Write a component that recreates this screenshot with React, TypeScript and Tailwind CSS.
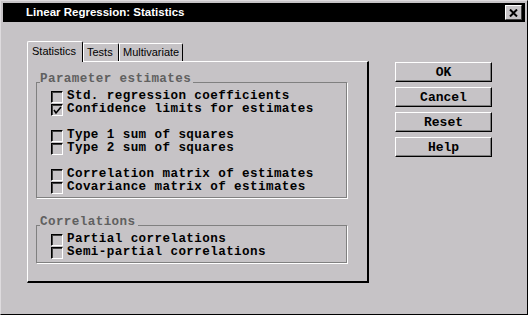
import React from "react";

const mono = { fontFamily: '"Liberation Mono", "DejaVu Sans Mono", monospace' };

function CheckBox({ checked }: { checked?: boolean }) {
  return (
    <span className="relative inline-block w-[12px] h-[12px] shrink-0 border-t border-l border-t-black border-l-black border-b border-r border-b-white border-r-white shadow-[inset_1px_1px_0_#404040] bg-[#c6c3c6]">
      {checked && (
        <svg className="absolute left-[1px] top-[1px]" width="9" height="9" viewBox="0 0 9 9">
          <path d="M1 4 L3 7 L8 1" stroke="black" strokeWidth="1.6" fill="none" />
        </svg>
      )}
    </span>
  );
}

function Row({ label, checked }: { label: string; checked?: boolean }) {
  return (
    <div className="flex items-center h-[13px] gap-[4px]">
      <CheckBox checked={checked} />
      <span className="text-[12.6px] tracking-[0.4px] font-bold leading-[13px] text-black whitespace-pre" style={mono}>
        {label}
      </span>
    </div>
  );
}

function Group({ title, children }: { title: string; children: React.ReactNode }) {
  return (
    <div className="relative border border-[#808080] shadow-[1px_1px_0_#ffffff] pl-[14px] pt-[7px] pb-[3px]">
      <span
        className="absolute -top-[10px] left-[3px] bg-[#c6c3c6] pr-[2px] text-[12.6px] tracking-[0.4px] font-bold leading-none text-[#606060] whitespace-pre"
        style={mono}
      >
        {title}
      </span>
      {children}
    </div>
  );
}

function Btn({ label }: { label: string }) {
  return (
    <button
      className="w-[97px] h-[20px] flex items-center justify-center bg-[#c6c3c6] border-t border-l border-t-white border-l-white border-b border-r border-b-black border-r-black shadow-[inset_-1px_-1px_0_#808080] text-[13px] font-bold leading-none text-black"
      style={mono}
    >
      {label}
    </button>
  );
}

export default function App() {
  return (
    <div className="w-[528px] h-[315px] bg-[#c6c3c6] border-t border-l border-t-[#dedbde] border-l-[#dedbde] border-b border-r border-b-black border-r-black p-[2px] overflow-hidden">
      <div className="h-[19px] bg-black flex items-center justify-between pl-[23px] pr-[3px]">
        <span
          className="text-white font-bold text-[11.5px] leading-none"
          style={{ fontFamily: '"Liberation Sans", Arial, sans-serif' }}
        >
          Linear Regression: Statistics
        </span>
        <span className="w-[17px] h-[15px] flex items-center justify-center bg-[#c6c3c6] border-t border-l border-t-white border-l-white border-b border-r border-b-[#404040] border-r-[#404040]">
          <svg width="9" height="8" viewBox="0 0 9 8">
            <path d="M1 0.5 L8 7.5 M8 0.5 L1 7.5" stroke="black" strokeWidth="2" />
          </svg>
        </span>
      </div>

      <div className="flex pl-[24px] pt-[19px]">
        <div className="w-[342px]">
          <div
            className="flex items-end h-[20px] text-[11px] text-black"
            style={{ fontFamily: '"Liberation Sans", Arial, sans-serif' }}
          >
            <div className="relative z-10 h-[21px] -mb-[1px] w-[56px] bg-[#c6c3c6] border-t border-l border-t-white border-l-white border-r border-r-black rounded-tl-[2px] rounded-tr-[2px] flex items-center pl-[4px] pb-[1px]">
              Statistics
            </div>
            <div className="h-[18px] w-[36px] border-t border-l border-t-white border-l-white border-r border-r-black rounded-tr-[2px] flex items-center pl-[3px]">
              Tests
            </div>
            <div className="h-[18px] w-[64px] border-t border-l border-t-white border-l-white border-r border-r-black rounded-tr-[2px] flex items-center pl-[3px]">
              Multivariate
            </div>
          </div>
          <div className="h-[222px] border-t border-l border-t-white border-l-white border-b-[2px] border-r-[2px] border-b-black border-r-black pl-[8px] pr-[20px] pt-[20px]">
            <Group title="Parameter estimates">
              <Row label="Std. regression coefficients" />
              <Row label="Confidence limits for estimates" checked />
              <div className="h-[13px]" />
              <Row label="Type 1 sum of squares" />
              <Row label="Type 2 sum of squares" />
              <div className="h-[13px]" />
              <Row label="Correlation matrix of estimates" />
              <Row label="Covariance matrix of estimates" />
            </Group>
            <div className="h-[27px]" />
            <Group title="Correlations">
              <Row label="Partial correlations" />
              <Row label="Semi-partial correlations" />
            </Group>
          </div>
        </div>

        <div className="flex flex-col gap-[5px] pl-[26px] pt-[21px]">
          <Btn label="OK" />
          <Btn label="Cancel" />
          <Btn label="Reset" />
          <Btn label="Help" />
        </div>
      </div>
    </div>
  );
}
